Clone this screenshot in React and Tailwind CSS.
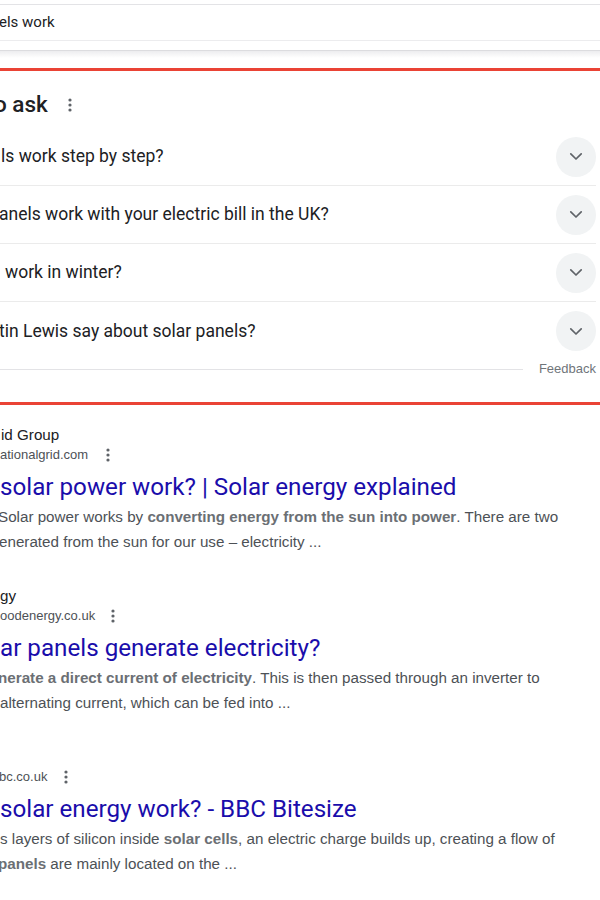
import React from "react";

const GS = { fontFamily: "Roboto, 'Open Sans', sans-serif" };
const AR = { fontFamily: "'Liberation Sans', Arial, sans-serif" };

function Dots({ className = "" }) {
  return (
    <svg width="4" height="16" viewBox="0 0 4 16" className={className} aria-hidden="true">
      <circle cx="2" cy="3" r="1.6" fill="#5f6368" />
      <circle cx="2" cy="8" r="1.6" fill="#5f6368" />
      <circle cx="2" cy="13" r="1.6" fill="#5f6368" />
    </svg>
  );
}

function Chevron() {
  return (
    <div className="w-[40px] h-[40px] rounded-full bg-[#f1f3f4] flex items-center justify-center shrink-0">
      <svg width="14" height="9" viewBox="0 0 14 9" fill="none" aria-hidden="true">
        <path d="M1.8 1.8 L7 7 L12.2 1.8" stroke="#5f6368" strokeWidth="1.7" strokeLinecap="round" strokeLinejoin="round" />
      </svg>
    </div>
  );
}

function Question({ text, shift, border = true }) {
  return (
    <div className={`h-[58px] flex items-center justify-between ${border ? "border-b border-[#ebebeb]" : ""}`}>
      <span className={`text-[17.5px] text-[#202124] whitespace-nowrap ${shift}`} style={GS}>
        {text}
      </span>
      <Chevron />
    </div>
  );
}

function Result({ site, siteShift = "", url, urlShift = "", dotsGap, title, titleShift = "", lines }) {
  return (
    <div className="flex flex-col">
      <div className={`h-[21px] leading-[21px] text-[15.2px] text-[#202124] whitespace-nowrap ${siteShift}`} style={AR}>
        {site}
      </div>
      <div className="h-[20px] flex items-center whitespace-nowrap">
        <span className={`text-[13px] text-[#4d5156] leading-[20px] ${urlShift}`} style={AR}>
          {url}
        </span>
        <Dots className={dotsGap} />
      </div>
      <div className={`mt-[9px] h-[26px] leading-[26px] text-[24.2px] text-[#1a0dab] whitespace-nowrap ${titleShift}`} style={GS}>
        {title}
      </div>
      <div className="mt-[4px] text-[15.2px] leading-[25px] text-[#4d5156]" style={AR}>
        {lines.map((l, i) => (
          <div key={i} className={`whitespace-nowrap ${l.shift || ""}`}>
            {l.parts.map((p, j) =>
              p.b ? (
                <b key={j} className="font-bold text-[#6b6f74]">{p.t}</b>
              ) : (
                <span key={j}>{p.t}</span>
              )
            )}
          </div>
        ))}
      </div>
    </div>
  );
}

export default function App() {
  return (
    <div className="w-[600px] h-[900px] overflow-hidden bg-white relative">
      {/* search box */}
      <div className="h-[4px]" />
      <div className="border-t border-[#e3e3e6] h-[36px] flex items-center pr-[4px]">
        <span className="text-[15px] text-[#202124] whitespace-nowrap ml-[-1px]" style={GS}>
          els work
        </span>
      </div>
      <div className="border-t border-[#ececee] h-[10px]" />
      <div className="border-t border-[#dcdcdf] h-[8px] bg-gradient-to-b from-[#ededef] to-white" />
      <div className="h-[10px]" />
      <div className="h-[3px] bg-[#ea4335]" />

      {/* People also ask */}
      <div className="pr-[4px]">
        <div className="h-[14px]" />
        <div className="h-[40px] flex items-center gap-[20px]">
          <span className="text-[22.5px] font-medium text-[#202124] whitespace-nowrap ml-[-6px]" style={GS}>
            o ask
          </span>
          <Dots />
        </div>
        <div className="h-[3px]" />
        <Question text="ls work step by step?" shift="ml-[1px]" />
        <Question text="anels work with your electric bill in the UK?" shift="ml-[-1px]" />
        <Question text="work in winter?" shift="ml-[5px]" />
        <Question text="tin Lewis say about solar panels?" shift="ml-[-1px]" border={false} />
        <div className="h-[18px] flex items-center gap-[16px]">
          <div className="flex-1 border-t border-[#e3e3e6]" />
          <span className="text-[13px] text-[#70757a] whitespace-nowrap" style={AR}>
            Feedback
          </span>
        </div>
      </div>
      <div className="h-[24px]" />
      <div className="h-[3px] bg-[#ea4335]" />
      <div className="h-[19px]" />

      {/* results */}
      <div className="flex flex-col gap-[31px]">
        <Result
          site="id Group"
          siteShift="ml-[1px]"
          url="ationalgrid.com"
          dotsGap="ml-[18px]"
          title="solar power work? | Solar energy explained"
          lines={[
            {
              shift: "ml-[-2px]",
              parts: [
                { t: "Solar power works by " },
                { t: "converting energy from the sun into power", b: true },
                { t: ". There are two" },
              ],
            },
            { shift: "ml-[-1px]", parts: [{ t: "enerated from the sun for our use – electricity ..." }] },
          ]}
        />
        <Result
          site="gy"
          url="oodenergy.co.uk"
          dotsGap="ml-[16px]"
          title="ar panels generate electricity?"
          lines={[
            {
              shift: "ml-[-2px]",
              parts: [
                { t: "nerate a direct current of electricity", b: true },
                { t: ". This is then passed through an inverter to" },
              ],
            },
            { parts: [{ t: "alternating current, which can be fed into ..." }] },
          ]}
        />
        <Result
          site=""
          url="bc.co.uk"
          urlShift="ml-[-1px]"
          dotsGap="ml-[17px]"
          title="solar energy work? - BBC Bitesize"
          lines={[
            {
              parts: [
                { t: "s layers of silicon inside " },
                { t: "solar cells", b: true },
                { t: ", an electric charge builds up, creating a flow of" },
              ],
            },
            {
              shift: "ml-[-2px]",
              parts: [{ t: "panels", b: true }, { t: " are mainly located on the ..." }],
            },
          ]}
        />
      </div>
    </div>
  );
}
